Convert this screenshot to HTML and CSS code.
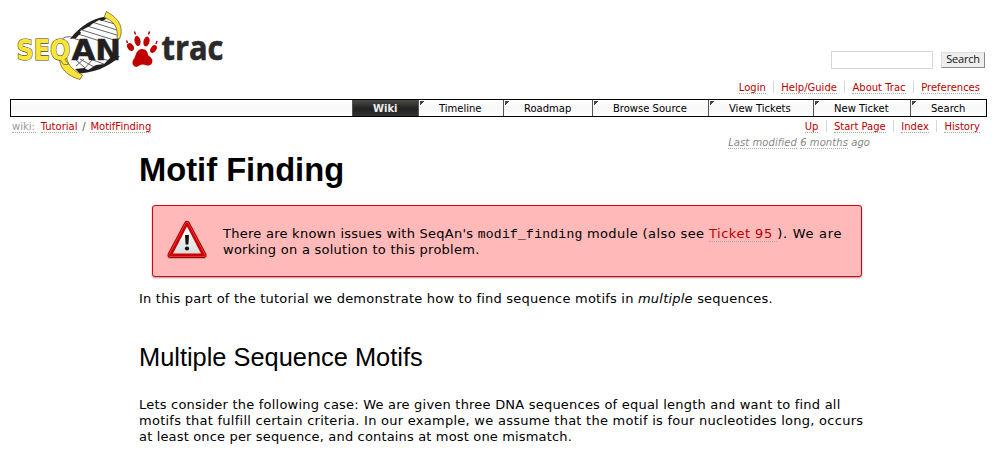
FILE: index.html
```html
<!DOCTYPE html>
<html lang="en">
<head>
<meta charset="utf-8">
<title>Motif Finding</title>
<link rel="stylesheet" href="styles.css">
</head>
<body>
<header class="banner">
  <svg class="logo" width="222" height="76" viewBox="10 8 222 76" role="img" aria-label="SeqAn trac">
    <g fill="none" stroke="#555" stroke-width=".9">
      <path d="M98 19l20 6M92 22l28 9M87 26l33 10M82 30l32 10M78 34l22 7M73 38l12 4M104 17l12 3"/>
      <path d="M75 59l10 9M80 59l14 8M76 66l8-7M90 59l14 5M100 58l10 3M84 69l9-10"/>
      <path d="M62 39C66 36 71 36 76 39"/>
    </g>
    <path fill="#231f20" d="M106 16.500C92 19 81 25 70 39L76 38L81 33L80 31L90 26L92 24L99 20L102 21L106 19Z"/>
    <path fill="#231f20" d="M120 56C113 63 100 72 80 73.500L75 69L84 68L88 70L96 65L104 64L111 57Z"/>
    <path fill="#fde43a" stroke="#55501a" stroke-width=".7" d="M106.500 11.500C116 17 125 25 119.500 39L117 39C119 26 112 20 104 17.500Z"/>
    <path fill="#fde43a" stroke="#55501a" stroke-width=".7" d="M59.500 57C59 68 67 76 80 79.500L82.500 75C74 71 68 66 66.500 57Z"/>
    <g class="wordmark">
      <text class="seq" x="16.500" y="59.500" textLength="54" lengthAdjust="spacingAndGlyphs">SEQ</text>
      <text class="an" x="71.500" y="59.500" textLength="49.500" lengthAdjust="spacingAndGlyphs">AN</text>
      <text class="trac" x="161.500" y="59.500" textLength="62" lengthAdjust="spacingAndGlyphs">trac</text>
    </g>
    <g fill="#c00000">
      <ellipse cx="130.500" cy="47" rx="3" ry="4.200" transform="rotate(-35 130.500 47)"/>
      <ellipse cx="137.500" cy="41" rx="3" ry="5" transform="rotate(-12 137.500 41)"/>
      <ellipse cx="146.500" cy="41.500" rx="3" ry="5" transform="rotate(14 146.500 41.500)"/>
      <ellipse cx="153.500" cy="49" rx="2.800" ry="4.200" transform="rotate(35 153.500 49)"/>
      <path d="M126.500 40.500l1 2.500M134.500 31.500l1 3M149.500 31.500l-1 3M157 41l-1 3" stroke="#c00000" stroke-width="1.500"/>
      <path d="M142 49C146 49 148 52 148 55C152 58 154 61 151 64.500C148 67 145 64 142 64.500C139 65 137 68.500 134 66C131 63 133 60 135 57C136 53 138 49 142 49Z"/>
    </g>
  </svg>
  <div class="tools">
    <form class="search"><input class="field" type="text" aria-label="Search"><button class="go" type="button">Search</button></form>
    <ul class="links">
      <li><a>Login</a></li><li><a>Help/Guide</a></li><li><a>About Trac</a></li><li><a>Preferences</a></li>
    </ul>
  </div>
</header>
<nav class="mainnav">
  <a class="tab w-wiki active">Wiki</a><a class="tab w-time">Timeline</a><a class="tab w-road">Roadmap</a><a class="tab w-browse">Browse Source</a><a class="tab w-view">View Tickets</a><a class="tab w-new">New Ticket</a><a class="tab w-search">Search</a>
</nav>
<div class="context">
  <div class="path"><a class="muted">wiki:</a> <a>Tutorial</a> <span>/</span> <a>MotifFinding</a></div>
  <ul class="links ctx">
    <li><a>Up</a></li><li><a>Start Page</a></li><li><a>Index</a></li><li><a>History</a></li>
  </ul>
</div>
<p class="modified"><a>Last modified</a> <a>6 months</a> ago</p>
<main class="content">
  <h1>Motif Finding</h1>
  <div class="warning">
    <svg class="sign" width="44" height="44" viewBox="0 0 44 44" aria-hidden="true">
      <defs><linearGradient id="g" x1="0" y1="0" x2="0" y2="1"><stop offset="0" stop-color="#fff"/><stop offset="1" stop-color="#ddd"/></linearGradient></defs>
      <path d="M22 6.500L39 38.500H5Z" fill="#a77" stroke="#b77f80" stroke-width="5" stroke-linejoin="round" opacity=".6"/>
      <path d="M22 6L38.500 37H5.500Z" fill="#a40000" stroke="#a40000" stroke-width="6" stroke-linejoin="round"/>
      <path d="M22 6L38.500 37H5.500Z" fill="#cc0000" stroke="#ef4040" stroke-width="4" stroke-linejoin="round"/>
      <path d="M22 6L38.500 37H5.500Z" fill="#cc0000" stroke="#cc0000" stroke-width="2.500" stroke-linejoin="round"/>
      <path d="M22 8.500L36 35.500H8Z" fill="url(#g)"/>
      <path d="M20 17h4l-.6 9.500h-2.800Z" fill="#111"/><circle cx="22" cy="30.500" r="2.100" fill="#111"/>
    </svg>
    <p><span class="wide">There are known issues with SeqAn's <code>modif_finding</code> <span class="mid">module (also see </span><a class="ticket">Ticket 95 </a><span class="tail">). We are</span></span><br><span class="wide">working on a solution to this problem.</span></p>
  </div>
  <p class="intro"><span class="medium">In this part of the tutorial we demonstrate how to find sequence motifs in <em>multiple</em> sequences.</span></p>
  <h2>Multiple Sequence Motifs</h2>
  <p class="body"><span class="medium">Lets consider the following case: We are given three DNA sequences of equal length and want to find all</span><br><span class="wide">motifs that fulfill certain criteria. In our example, we assume that the motif is four nucleotides long, occurs</span><br><span class="narrow">at least once per sequence, and contains at most one mismatch.</span></p>
</main>
</body>
</html>
```
FILE: styles.css
```css
* { box-sizing: border-box; }
body { margin: 0; background: #fff; color: #000; font: 13px/16px Verdana, "DejaVu Sans", sans-serif; overflow: hidden; height: 455px; }
ul, p, h1, h2 { margin: 0; padding: 0; list-style: none; }
.banner { height: 99px; padding: 8px 12px 0 10px; display: flex; justify-content: space-between; }
.logo { display: block; overflow: visible; }
.wordmark text { font-family: "DejaVu Sans", sans-serif; font-weight: bold; font-size: 29px; }
.seq { fill: #fde43a; stroke: #4a4418; stroke-width: 1.2px; paint-order: stroke; }
.an { fill: #231f20; stroke: #231f20; stroke-width: .5px; }
.wordmark .trac { fill: #2a2a2a; font-family: "Open Sans", "Noto Sans", sans-serif; font-weight: 700; font-size: 34px; stroke: #2a2a2a; stroke-width: .6px; }
.tools { display: flex; flex-direction: column; align-items: flex-end; padding-top: 43px; }
.search { display: flex; gap: 8px; align-items: center; height: 18px; margin: 0; }
.field { width: 102px; height: 18px; border: 1px solid #d7d7d7; padding: 0; margin: 0; }
.go { width: 44px; height: 16px; border: 1px solid; border-color: #ddd #888 #888 #ddd; background: #eee; font: 11px/12px "Open Sans", sans-serif; letter-spacing: -.25px; padding: 0 0 2px; margin: 0; color: #111; }
.links { display: flex; font-size: 10px; line-height: 13px; margin-top: 12px; padding-right: 5px; }
.links li { padding: 0 7.200px 0 7.400px; border-right: 1px solid #d7d7d7; height: 12px; }
.links li:last-child { border: 0; padding-right: 0; }
a { color: #b00; border-bottom: 1px dotted #aaa; }
.links a, .path a { display: inline-block; line-height: 12px; height: 12px; }
.mainnav { margin: 0 10px; height: 18px; border: 1px solid #000; display: flex; justify-content: flex-end; background: linear-gradient(#fff, #f7f7f7 50%, #fff); font-size: 10px; line-height: 17px; }
.tab { border: 0; border-left: 1px solid #555; color: #000; padding-left: 20px; white-space: nowrap; background: linear-gradient(135deg, #444 3px, transparent 3.500px) 1px 1px no-repeat; }
.active { background: linear-gradient(#4b4b46, #222 55%, #333); color: #eee; font-weight: bold; }
.w-wiki { width: 66px; }
.w-time { width: 85px; }
.w-road { width: 89px; }
.w-browse { width: 116px; }
.w-view { width: 105px; }
.w-new { width: 97px; }
.w-search { width: 76px; }
.context { display: flex; justify-content: space-between; padding: 3px 12px 0; height: 19px; font-size: 10px; line-height: 13px; }
.ctx { margin-top: 0; }
.path { color: #555; word-spacing: 1.6px; }
.path .muted { color: #999; padding-right: 1px; }
.modified { text-align: right; padding-right: 127px; height: 14px; font-size: 10px; line-height: 13px; font-style: italic; color: #888; letter-spacing: .07px; }
.modified a { color: #888; display: inline-block; height: 12px; line-height: 12px; }
.content { width: 730px; margin-left: 139px; white-space: nowrap; }
h1 { font: bold 32.700px/40px "Liberation Sans", Arial, sans-serif; height: 55px; }
.warning { margin-left: 13px; width: 710px; height: 72px; background: #ffb9b9; border: 1px solid #d8000c; border-radius: 3px; box-shadow: 0 1px 2px #999; padding: 12px 0 0 12px; display: flex; gap: 14px; }
.warning p { padding-top: 8px; }
code { font: 13px/14px "Liberation Mono", "Courier New", monospace; }
.narrow { letter-spacing: .16px; }
.medium { letter-spacing: .215px; }
.wide { letter-spacing: .26px; }
.mid { letter-spacing: .4px; }
.tail { letter-spacing: .7px; }
.ticket { letter-spacing: .5px; white-space: pre; }
.intro { padding-top: 14px; height: 63px; }
h2 { font: 25.400px/34px "Liberation Sans", Arial, sans-serif; height: 57px; }
```
